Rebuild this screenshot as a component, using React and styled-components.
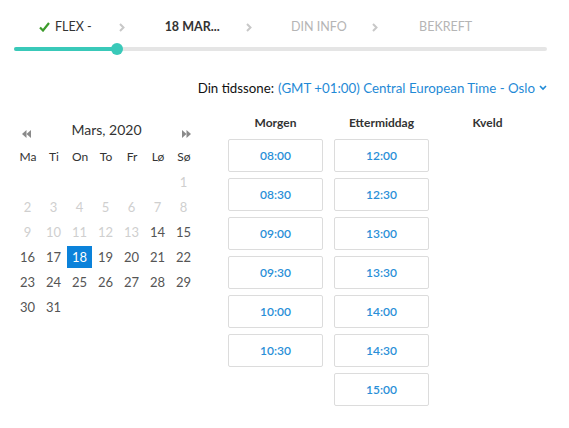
import React from 'react';
import styled, { createGlobalStyle } from 'styled-components';

const GlobalStyle = createGlobalStyle`
  body {
    margin: 0;
    background: #fff;
    font-family: 'Lato', 'Noto Sans', sans-serif;
    color: #333;
  }
`;

const Page = styled.div`
  width: 569px;
  padding: 0 22px 0 14px;
  box-sizing: border-box;
`;

const Steps = styled.div`
  display: flex;
  width: 507px;
  margin: 18px 0 0 -12px;
  height: 18px;
`;

const Step = styled.div`
  flex: 1;
  position: relative;
  display: flex;
  align-items: center;
  justify-content: center;
  gap: 5px;
  font-size: 12.5px;
  line-height: 18px;
  font-weight: ${({ $bold }) => ($bold ? 700 : 400)};
  color: ${({ $muted }) => ($muted ? '#b5b5b5' : '#333')};
  text-transform: uppercase;
`;

const StepArrow = styled.svg`
  position: absolute;
  right: 4px;
  top: 5px;
`;

const Track = styled.div`
  position: relative;
  height: 4px;
  margin-top: 11px;
  border-radius: 2px;
  background: #e5e5e5;
`;

const Fill = styled.div`
  height: 100%;
  border-radius: 2px;
  background: #39c9b9;
`;

const Knob = styled.div`
  position: absolute;
  top: -4px;
  width: 12px;
  height: 12px;
  margin-left: -6px;
  border-radius: 50%;
  background: #39c9b9;
`;

const Timezone = styled.div`
  margin-top: 28px;
  display: flex;
  justify-content: flex-end;
  align-items: center;
  gap: 4px;
  font-size: 13.3px;
  line-height: 18px;
  color: #111;
`;

const ZoneLink = styled.span`
  color: #1f8ad6;
  display: inline-flex;
  align-items: center;
  gap: 4px;
`;

const Main = styled.div`
  display: flex;
  margin-top: 16px;
`;

const Calendar = styled.div`
  width: 184px;
  padding-top: 8px;
`;

const MonthBar = styled.div`
  display: flex;
  align-items: center;
  justify-content: space-between;
  padding: 0 7px 0 8px;
  height: 20px;
`;

const MonthTitle = styled.div`
  font-size: 14px;
  color: #333;
  margin-top: -4px;
`;

const NavIcon = styled.svg`
  margin-top: 5px;
`;

const DayGrid = styled.div`
  display: grid;
  grid-template-columns: repeat(7, 26px);
  grid-auto-rows: 22px;
  row-gap: 3px;
  margin: 5px 0 0 1px;
`;

const WeekDay = styled.div`
  text-align: center;
  font-size: 12px;
  line-height: 22px;
  color: #333;
  margin-bottom: 2px;
`;

const Day = styled.div`
  text-align: center;
  font-size: 13px;
  line-height: 22px;
  width: 25px;
  color: ${({ $off, $active }) => ($active ? '#fff' : $off ? '#cfcfcf' : '#555')};
  background: ${({ $active }) => ($active ? '#0b82da' : 'transparent')};
  grid-column: ${({ $start }) => $start || 'auto'};
`;

const Slots = styled.div`
  display: flex;
  gap: 11px;
  margin-left: 30px;
`;

const SlotColumn = styled.div`
  width: 95px;
  display: flex;
  flex-direction: column;
  gap: 6px;
`;

const SlotHeading = styled.div`
  text-align: center;
  font-size: 12px;
  font-weight: 700;
  line-height: 20px;
  color: #333;
  height: 20px;
`;

const SlotButton = styled.button`
  height: 33px;
  width: 95px;
  border: 1px solid #dcdcdc;
  border-radius: 2px;
  background: #fff;
  color: #2a8fd7;
  font-family: 'Lato', sans-serif;
  font-size: 12px;
  font-weight: 600;
  cursor: pointer;
`;

const columns = [
  { title: 'Morgen', times: ['08:00', '08:30', '09:00', '09:30', '10:00', '10:30'] },
  { title: 'Ettermiddag', times: ['12:00', '12:30', '13:00', '13:30', '14:00', '14:30', '15:00'] },
  { title: 'Kveld', times: [] },
];

const weekDays = ['Ma', 'Ti', 'On', 'To', 'Fr', 'Lø', 'Sø'];

const Chevron = () => (
  <StepArrow width="6" height="9" viewBox="0 0 6 9">
    <polyline points="1,1 4.5,4.5 1,8" fill="none" stroke="#c8c8c8" strokeWidth="2" />
  </StepArrow>
);

const Check = () => (
  <svg width="11" height="10" viewBox="0 0 11 10">
    <polyline points="1,5.5 4,8.5 10,1" fill="none" stroke="#3c9b2b" strokeWidth="2.2" />
  </svg>
);

export default function App() {
  const days = Array.from({ length: 31 }, (_, i) => i + 1);
  return (
    <Page>
      <GlobalStyle />
      <Steps>
        <Step><Check />FLEX -<Chevron /></Step>
        <Step $bold>18 MAR...<Chevron /></Step>
        <Step $muted>Din info<Chevron /></Step>
        <Step $muted>Bekreft</Step>
      </Steps>
      <Track>
        <Fill style={{ width: '103px' }} />
        <Knob style={{ left: '103px' }} />
      </Track>
      <Timezone>
        Din tidssone:
        <ZoneLink>
          (GMT +01:00) Central European Time - Oslo
          <svg width="8" height="6" viewBox="0 0 8 6">
            <polyline points="1,1 4,4 7,1" fill="none" stroke="#1f8ad6" strokeWidth="1.6" />
          </svg>
        </ZoneLink>
      </Timezone>
      <Main>
        <Calendar>
          <MonthBar>
            <NavIcon width="9" height="8" viewBox="0 0 9 8">
              <polygon points="4.5,0 4.5,8 0,4" fill="#8a8a8a" />
              <polygon points="9,0 9,8 4.5,4" fill="#8a8a8a" />
            </NavIcon>
            <MonthTitle>Mars, 2020</MonthTitle>
            <NavIcon width="9" height="8" viewBox="0 0 9 8">
              <polygon points="0,0 0,8 4.5,4" fill="#8a8a8a" />
              <polygon points="4.5,0 4.5,8 9,4" fill="#8a8a8a" />
            </NavIcon>
          </MonthBar>
          <DayGrid>
            {weekDays.map((d) => (
              <WeekDay key={d}>{d}</WeekDay>
            ))}
            {days.map((d) => (
              <Day key={d} $start={d === 1 ? 7 : undefined} $off={d < 14} $active={d === 18}>
                {d}
              </Day>
            ))}
          </DayGrid>
        </Calendar>
        <Slots>
          {columns.map((col) => (
            <SlotColumn key={col.title}>
              <SlotHeading>{col.title}</SlotHeading>
              {col.times.map((t) => (
                <SlotButton key={t}>{t}</SlotButton>
              ))}
            </SlotColumn>
          ))}
        </Slots>
      </Main>
    </Page>
  );
}
